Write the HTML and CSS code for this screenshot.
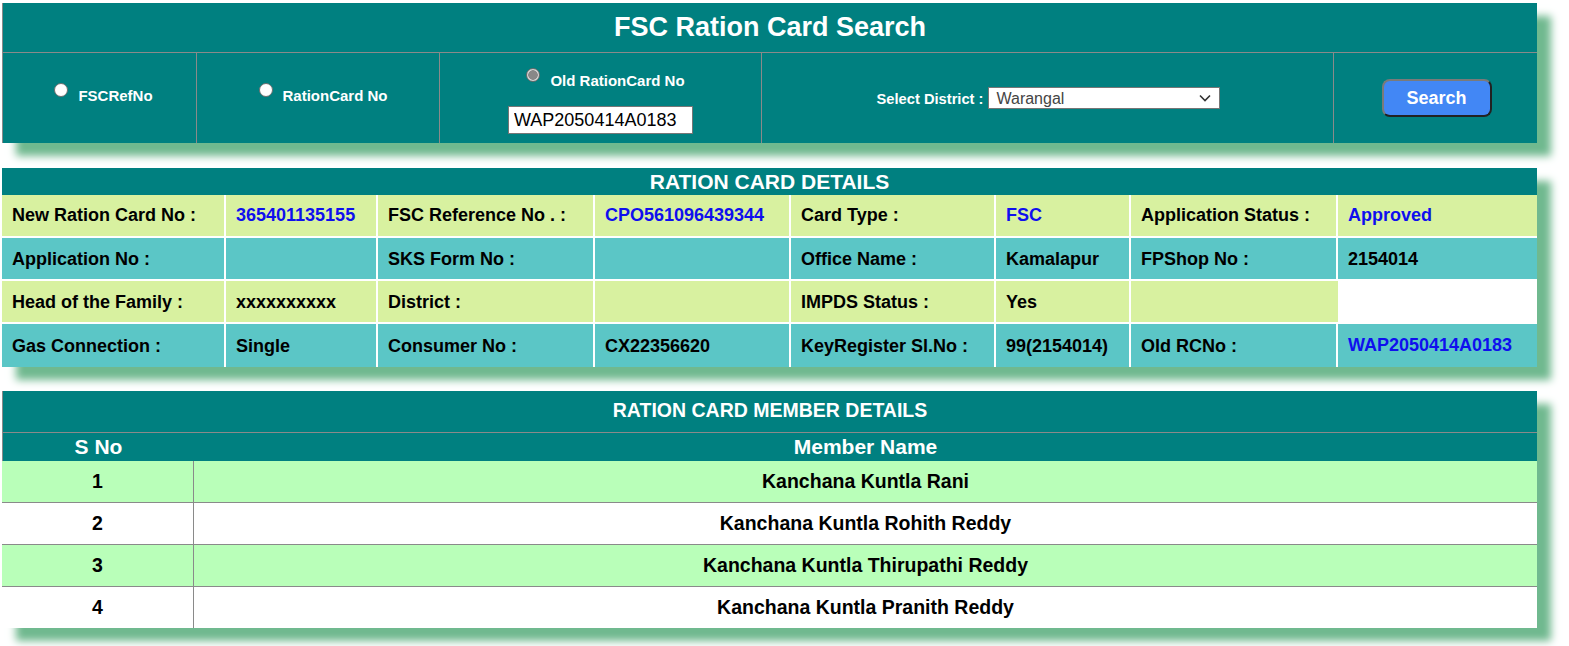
FILE: index.html
```html
<!DOCTYPE html>
<html lang="en">
<head>
<meta charset="utf-8">
<title>FSC Ration Card Search</title>
<link rel="stylesheet" href="styles.css">
</head>
<body>
<main class="page">
  <section class="panel search-panel">
    <h1 class="search-title">FSC Ration Card Search</h1>
    <div class="search-row">
      <div class="search-cell cell-radio cell-ref">
        <label class="radio-label"><input type="radio" name="stype" class="radio">FSCRefNo</label>
      </div>
      <div class="search-cell cell-radio cell-rc">
        <label class="radio-label"><input type="radio" name="stype" class="radio">RationCard No</label>
      </div>
      <div class="search-cell cell-old">
        <label class="radio-label"><input type="radio" name="stype" class="radio radio-on" checked>Old RationCard No</label>
        <input type="text" class="text-input" value="WAP2050414A0183">
      </div>
      <div class="search-cell cell-district">
        <span class="district-label">Select District :</span>
        <span class="select-wrap">
          <select class="district-select">
            <option>Warangal</option>
          </select>
          <svg class="select-chevron" width="12" height="8" viewBox="0 0 12 8" aria-hidden="true">
            <path d="M1 1.5 L6 6.5 L11 1.5" fill="none" stroke="#333" stroke-width="1.6"/>
          </svg>
        </span>
      </div>
      <div class="search-cell cell-button">
        <button type="button" class="btn-search">Search</button>
      </div>
    </div>
  </section>

  <section class="panel details-panel">
    <table class="details">
      <colgroup>
        <col class="c1"><col class="c2"><col class="c3"><col class="c4"><col class="c5"><col class="c6"><col class="c7"><col class="c8">
      </colgroup>
      <thead>
        <tr><th colspan="8" class="details-head">RATION CARD DETAILS</th></tr>
      </thead>
      <tbody>
        <tr class="row-a">
          <td>New Ration Card No :</td><td class="blue">365401135155</td>
          <td>FSC Reference No . :</td><td class="blue">CPO561096439344</td>
          <td>Card Type :</td><td class="blue">FSC</td>
          <td>Application Status :</td><td class="blue">Approved</td>
        </tr>
        <tr class="row-b">
          <td>Application No :</td><td></td>
          <td>SKS Form No :</td><td></td>
          <td>Office Name :</td><td>Kamalapur</td>
          <td>FPShop No :</td><td>2154014</td>
        </tr>
        <tr class="row-a">
          <td>Head of the Family :</td><td>xxxxxxxxxx</td>
          <td>District :</td><td></td>
          <td>IMPDS Status :</td><td>Yes</td>
          <td class="last-filled"></td>
        </tr>
        <tr class="row-b last-row">
          <td>Gas Connection :</td><td>Single</td>
          <td>Consumer No :</td><td>CX22356620</td>
          <td>KeyRegister Sl.No :</td><td>99(2154014)</td>
          <td>Old RCNo :</td><td class="blue raised">WAP2050414A0183</td>
        </tr>
      </tbody>
    </table>
  </section>

  <section class="panel members-panel">
    <table class="members">
      <colgroup><col class="m1"><col class="m2"></colgroup>
      <thead>
        <tr><th colspan="2" class="members-head">RATION CARD MEMBER DETAILS</th></tr>
        <tr class="members-cols"><th>S No</th><th>Member Name</th></tr>
      </thead>
      <tbody>
        <tr class="m-green"><td>1</td><td>Kanchana Kuntla Rani</td></tr>
        <tr class="m-white"><td>2</td><td>Kanchana Kuntla Rohith Reddy</td></tr>
        <tr class="m-green"><td>3</td><td>Kanchana Kuntla Thirupathi Reddy</td></tr>
        <tr class="m-white"><td>4</td><td>Kanchana Kuntla Pranith Reddy</td></tr>
      </tbody>
    </table>
  </section>
</main>
</body>
</html>
```

FILE: styles.css
```css
* { box-sizing: border-box; }

html, body {
  margin: 0;
  padding: 0;
  background: #ffffff;
}

body {
  font-family: "Liberation Sans", Arial, sans-serif;
  color: #000;
  padding-bottom: 40px;
}

.page {
  width: 1535px;
  margin: 3px 0 0 2px;
  display: flex;
  flex-direction: column;
  gap: 24px;
}

.panel {
  background: #fff;
  box-shadow: 14px 13px 8px #70b98f;
}

/* ---------- Search panel ---------- */
.search-panel {
  background: #008080;
  border-left: 1px solid #8a8a8a;
  margin-bottom: 1px;
}

.search-title {
  margin: 0;
  height: 50px;
  border-bottom: 1px solid #8a8a8a;
  color: #fff;
  font-size: 27px;
  font-weight: bold;
  text-align: center;
  line-height: 48px;
}

.search-row {
  display: grid;
  grid-template-columns: 193px 243px 322px 572px 1fr;
  height: 90px;
}

.search-cell {
  display: flex;
  align-items: center;
  justify-content: center;
  color: #fff;
  font-weight: bold;
}

.search-cell + .search-cell {
  border-left: 1px solid #8a8a8a;
}

.cell-radio {
  padding-bottom: 6px;
}

.cell-ref { padding-left: 8px; }
.cell-rc { padding-left: 10px; }

.radio-label {
  display: flex;
  align-items: center;
  font-size: 15px;
  color: #fff;
  font-weight: bold;
}

.radio {
  appearance: none;
  -webkit-appearance: none;
  flex: none;
  width: 14px;
  height: 14px;
  margin: 0 10px 11px 0;
  border: 1.5px solid #6e6e6e;
  border-radius: 50%;
  background: #fff;
}

.radio-on {
  background: radial-gradient(circle, #888 0 4.5px, #d4d4d4 5px 100%);
  border-color: #6a6a6a;
}

.cell-old {
  flex-direction: column;
  justify-content: flex-start;
  padding-top: 14px;
  gap: 13px;
}

.cell-old .radio-label {
  padding-left: 10px;
  margin-top: 1px;
}

.text-input {
  width: 185px;
  height: 28px;
  border: 1px solid #767676;
  padding: 0 5px;
  font-family: "Liberation Sans", Arial, sans-serif;
  font-size: 18px;
  color: #000;
  background: #fff;
}

.cell-district {
  gap: 5px;
  padding-left: 2px;
}

.district-label {
  font-size: 14.7px;
  padding-top: 2px;
}

.select-wrap {
  position: relative;
  display: inline-block;
  width: 232px;
  height: 22px;
}

.district-select {
  appearance: none;
  -webkit-appearance: none;
  width: 232px;
  height: 22px;
  font-family: "Liberation Sans", Arial, sans-serif;
  font-size: 16px;
  color: #444;
  border: 1px solid #767676;
  border-radius: 0;
  background: #fff;
  padding: 0 4px 0 7px;
  display: block;
}

.select-chevron {
  position: absolute;
  right: 9px;
  top: 7px;
  pointer-events: none;
}

.btn-search {
  width: 110px;
  height: 38px;
  background: #4287f5;
  color: #fff;
  font-family: "Liberation Sans", Arial, sans-serif;
  font-size: 18px;
  font-weight: bold;
  border: 2px solid;
  border-color: #7a7a7a #222 #222 #7a7a7a;
  border-radius: 8px;
  margin-left: 2px;
}

/* ---------- Details panel ---------- */
.details {
  width: 100%;
  border-collapse: separate;
  border-spacing: 0;
  table-layout: fixed;
  font-size: 18px;
  font-weight: bold;
}

.c1 { width: 224px; }
.c2 { width: 152px; }
.c3 { width: 217px; }
.c4 { width: 196px; }
.c5 { width: 205px; }
.c6 { width: 135px; }
.c7 { width: 207px; }
.c8 { width: 199px; }

.details-head {
  background: #008080;
  color: #fff;
  height: 27px;
  padding: 0;
  font-size: 21px;
  line-height: 27px;
  text-align: center;
}

.details td {
  height: 43px;
  padding: 0 0 0 10px;
  border-right: 2px solid #fff;
  border-bottom: 2px solid #fff;
  vertical-align: middle;
  white-space: nowrap;
}

.details tbody tr:nth-child(n+2) td { padding-top: 2px; }

.details td:last-child { border-right: 0; }
.details .last-row td { border-bottom: 0; height: 43px; }

.row-a td { background: #d8f1a0; }
.row-b td { background: #5bc6c6; }

.blue { color: #0f0fee; }

.details .raised { padding-top: 0; padding-bottom: 3px; }

/* ---------- Members panel ---------- */
.members {
  width: 100%;
  border-collapse: separate;
  border-spacing: 0;
  table-layout: fixed;
  font-weight: bold;
}

.m1 { width: 192px; }
.m2 { width: 1343px; }

.members-head {
  background: #008080;
  color: #fff;
  height: 42px;
  padding: 0 0 3px;
  font-size: 19.5px;
  text-align: center;
  border-bottom: 1px solid #8a8a8a;
  border-left: 1px solid #8a8a8a;
}

.members-cols th {
  background: #008080;
  color: #fff;
  height: 28px;
  padding: 0;
  font-size: 21px;
  text-align: center;
  vertical-align: middle;
}

.members-cols th:first-child { border-left: 1px solid #8a8a8a; }

.members td {
  height: 42px;
  padding: 0;
  text-align: center;
  vertical-align: middle;
  font-size: 19.5px;
  border-bottom: 1px solid #8a8a8a;
}

.members td:first-child { border-right: 1px solid #8a8a8a; }
.members tbody tr:last-child td { border-bottom: 0; height: 41px; }

.m-green td { background: #b9ffb9; }
.m-white td { background: #fff; }
```
